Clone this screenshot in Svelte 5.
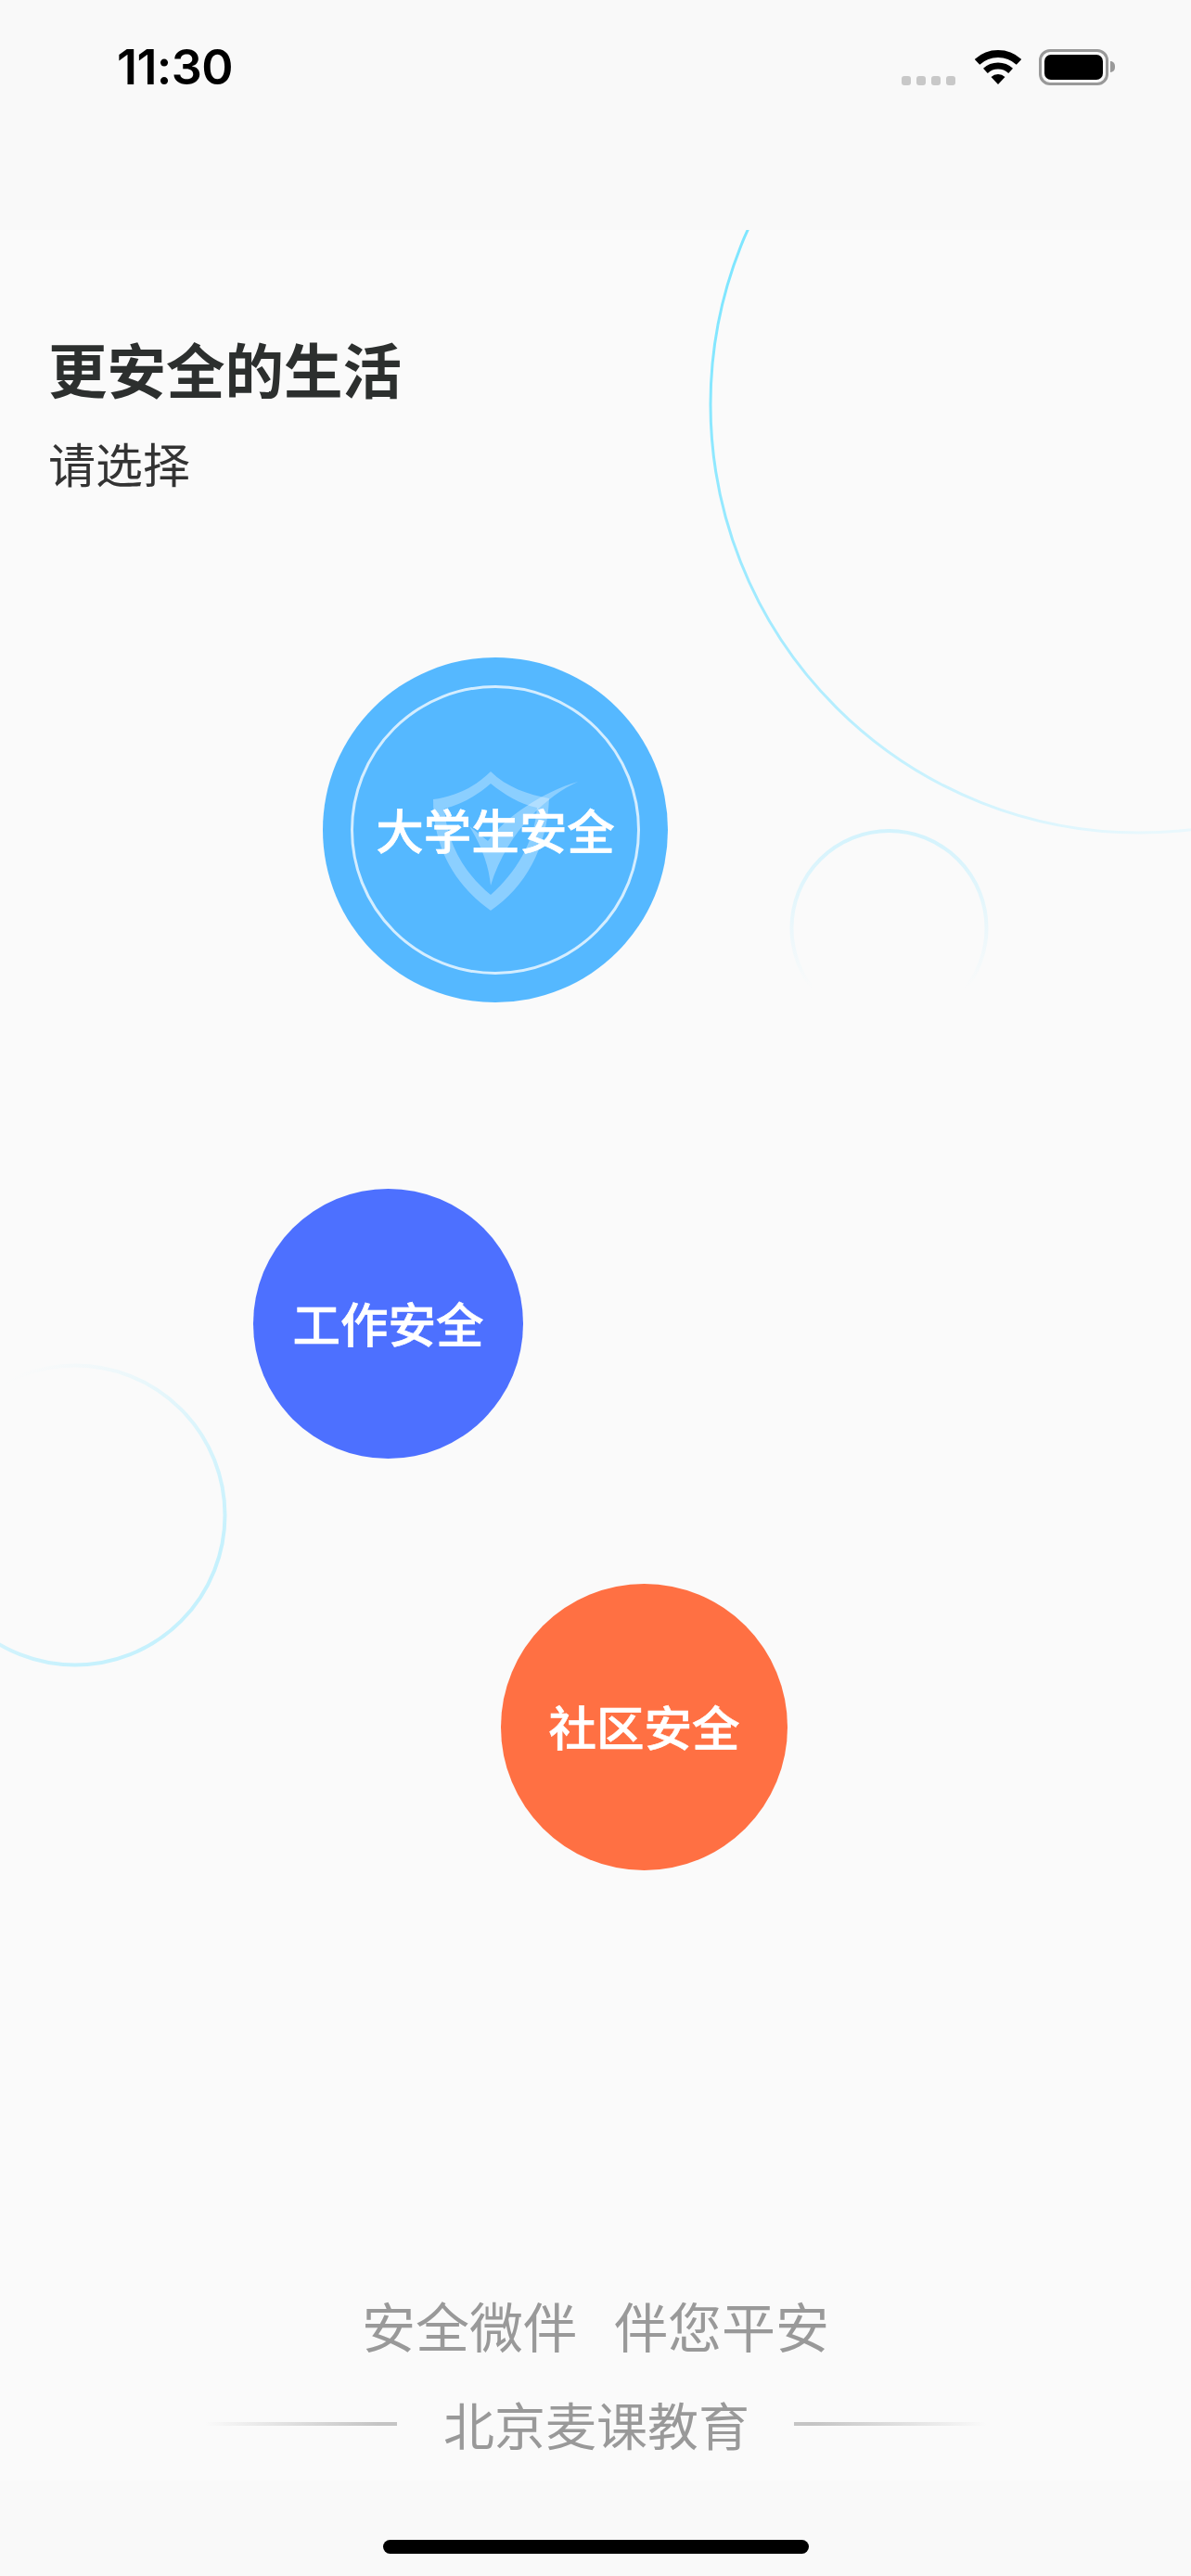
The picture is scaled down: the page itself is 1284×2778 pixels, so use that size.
<script>
  // three scenes the user can pick from
  const smallScenes = [
    { name: '工作安全', cls: 'work' },
    { name: '社区安全', cls: 'community' }
  ];
</script>

<div class="page">
  <!-- decorative rings -->
  <svg class="rings" width="1284" height="2778" viewBox="0 0 1284 2778" fill="none">
    <defs>
      <linearGradient id="ringBig" gradientUnits="userSpaceOnUse" x1="790" y1="300" x2="1240" y2="900">
        <stop offset="0" stop-color="#7fe6ff" />
        <stop offset="0.45" stop-color="#a6ebff" />
        <stop offset="1" stop-color="#e9f8fd" />
      </linearGradient>
      <linearGradient id="ringSmall" gradientUnits="userSpaceOnUse" x1="958" y1="895" x2="958" y2="1065">
        <stop offset="0" stop-color="#d3f3fd" />
        <stop offset="1" stop-color="#fafafa" />
      </linearGradient>
      <linearGradient id="ringLeft" gradientUnits="userSpaceOnUse" x1="20" y1="1480" x2="200" y2="1700">
        <stop offset="0" stop-color="#fafafa" />
        <stop offset="1" stop-color="#c6f1fd" />
      </linearGradient>
    </defs>
    <circle cx="1228" cy="436" r="462" stroke="url(#ringBig)" stroke-width="3" />
    <circle cx="958.5" cy="1001" r="105" stroke="url(#ringSmall)" stroke-width="4" />
    <circle cx="81" cy="1634" r="161.5" stroke="url(#ringLeft)" stroke-width="4" />
  </svg>

  <header class="top-bar">
    <div class="status">
      <span class="time">11:30</span>
      <div class="indicators">
        <div class="signal"><i></i><i></i><i></i><i></i></div>
        <svg class="wifi" width="50" height="37" viewBox="0 0 50 37">
          <path d="M2.5 12.9A33 33 0 0 1 47.5 12.9" fill="none" stroke="#000" stroke-width="8" />
          <path d="M11.4 22.4A20 20 0 0 1 38.6 22.4" fill="none" stroke="#000" stroke-width="7" />
          <path d="M25 37L17.5 29A11 11 0 0 1 32.5 29Z" fill="#000" />
        </svg>
        <div class="battery"><div class="level"></div></div>
        <div class="nub"></div>
      </div>
    </div>
  </header>

  <main class="content">
    <h1>更安全的生活</h1>
    <p class="sub">请选择</p>

    <div class="bubble student">
      <div class="inner-ring"></div>
      <svg class="shield" width="170" height="165" viewBox="460 825 170 165">
        <path
          fill-rule="evenodd"
          d="M529 833C512 850 490 860 467 863C467 915 490 955 529 983C566 958 590 915 592 862C570 858 546 850 529 833ZM529 846C544 858 560 868 579 872C576 910 556 942 529 966C502 944 482 912 479 873C497 869 514 859 529 846Z"
        />
        <path d="M623 844C592 858 548 895 529 956C527 935 520 915 506 892L526 908C545 882 585 855 623 844Z" />
      </svg>
      <span>大学生安全</span>
    </div>

    {#each smallScenes as scene}
      <div class="bubble {scene.cls}"><span>{scene.name}</span></div>
    {/each}

    <footer class="slogan">
      <div class="line-one"><span>安全微伴</span><span>伴您平安</span></div>
      <div class="line-two">
        <i class="rule left"></i>
        <span>北京麦课教育</span>
        <i class="rule right"></i>
      </div>
    </footer>
  </main>

  <div class="safe-area"><div class="home-bar"></div></div>
</div>

<style>
  :global(body) {
    margin: 0;
    background: #fafafa;
  }

  .page {
    position: relative;
    width: 1284px;
    height: 2778px;
    overflow: hidden;
    display: flex;
    flex-direction: column;
    background: #fafafa;
    font-family: "Noto Sans CJK SC", "Noto Sans", sans-serif;
  }

  .rings {
    position: absolute;
    left: 0;
    top: 0;
  }

  .top-bar {
    position: relative;
    height: 248px;
    flex: none;
    background: #f9f9f9;
    box-sizing: border-box;
    padding: 44px 82px 0 126px;
  }

  .status {
    display: flex;
    justify-content: space-between;
    align-items: flex-start;
  }

  .time {
    font-family: Inter, "Liberation Sans", sans-serif;
    font-size: 52px;
    font-weight: 600;
    line-height: 58px;
    letter-spacing: -0.6px;
    color: #000;
  }

  .indicators {
    display: flex;
    align-items: flex-start;
    padding-top: 9px;
  }

  .signal {
    display: flex;
    gap: 6px;
    margin-top: 29px;
    margin-right: 21px;
  }

  .signal i {
    width: 10px;
    height: 10px;
    border-radius: 3px;
    background: #c8c8c8;
  }

  .wifi {
    margin-top: 1px;
    margin-right: 19px;
  }

  .battery {
    width: 75px;
    height: 39px;
    box-sizing: border-box;
    border: 3px solid #999;
    border-radius: 12px;
    padding: 3px;
  }

  .level {
    height: 100%;
    border-radius: 7px;
    background: #000;
  }

  .nub {
    width: 5px;
    height: 12px;
    margin: 13px 0 0 2px;
    border-radius: 0 6px 6px 0;
    background: #999;
  }

  .content {
    position: relative;
    flex: 1;
    display: flex;
    flex-direction: column;
    align-items: flex-start;
    min-height: 0;
  }

  h1 {
    margin: 112px 0 0 52px;
    font-family: "Noto Sans CJK SC", sans-serif;
    font-size: 63.5px;
    line-height: 72px;
    font-weight: 700;
    color: #2c2f2e;
  }

  .sub {
    margin: 38px 0 0 52px;
    font-size: 51px;
    line-height: 58px;
    font-weight: 400;
    color: #333;
  }

  .bubble {
    position: relative;
    flex: none;
    display: flex;
    align-items: center;
    justify-content: center;
    box-sizing: border-box;
    padding-bottom: 4px;
    border-radius: 50%;
    color: #fff;
    font-family: "Noto Sans CJK SC Medium", "Noto Sans CJK SC", sans-serif;
    font-size: 51.5px;
    font-weight: 500;
    -webkit-text-stroke: 0.6px #fff;
  }

  .bubble span {
    position: relative;
  }

  .student {
    width: 372px;
    height: 372px;
    margin: 181px 0 0 348px;
    background: #55b8ff;
  }

  .inner-ring {
    position: absolute;
    inset: 30px;
    border: 3px solid rgba(255, 255, 255, 0.75);
    border-radius: 50%;
  }

  .shield {
    position: absolute;
    left: 112px;
    top: 115px;
    fill: rgba(255, 255, 255, 0.32);
  }

  .work {
    width: 291px;
    height: 291px;
    margin: 201px 0 0 273px;
    background: #4d70ff;
  }

  .community {
    width: 309px;
    height: 309px;
    margin: 135px 0 0 540px;
    background: #ff7043;
  }

  .slogan {
    margin-top: auto;
    width: 100%;
    color: #999;
    text-align: center;
  }

  .line-one {
    display: flex;
    justify-content: center;
    gap: 40px;
    font-size: 58px;
    line-height: 66px;
  }

  .line-two {
    display: flex;
    align-items: center;
    justify-content: center;
    margin-top: 42px;
    margin-bottom: 32px;
    font-size: 55px;
    line-height: 62px;
  }

  .rule {
    width: 207px;
    height: 4px;
    margin-top: 2px;
  }

  .rule.left {
    margin-right: 50px;
    background: linear-gradient(to right, rgba(190, 190, 190, 0), #c4c4c4 90%);
  }

  .rule.right {
    margin-left: 48px;
    background: linear-gradient(to left, rgba(190, 190, 190, 0), #c4c4c4 90%);
  }

  .safe-area {
    position: relative;
    flex: none;
    height: 102px;
    background: #f9f9f9;
    box-sizing: border-box;
    padding-top: 63px;
    display: flex;
    justify-content: center;
  }

  .home-bar {
    width: 459px;
    height: 15px;
    border-radius: 8px;
    background: #000;
  }
</style>
